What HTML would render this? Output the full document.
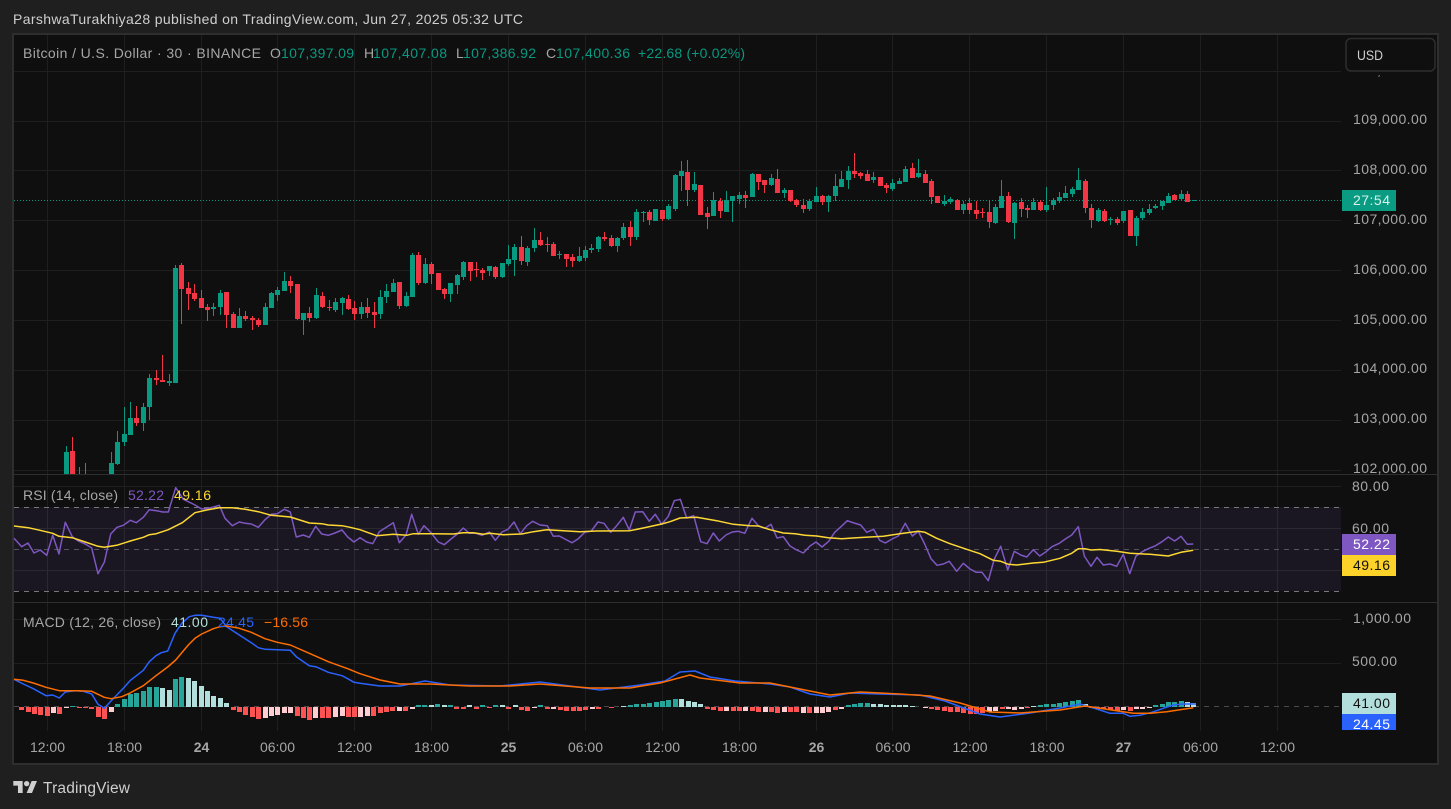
<!DOCTYPE html>
<html><head><meta charset="utf-8"><title>BTC chart</title>
<style>html,body{margin:0;padding:0;background:#1f1f1f;width:1451px;height:809px;overflow:hidden}svg{display:block}text{font-family:"Liberation Sans",sans-serif;font-size:14px;fill:#a6a6a6}</style></head><body>
<svg width="1451" height="809" viewBox="0 0 1451 809" xmlns="http://www.w3.org/2000/svg">
<defs><clipPath id="p"><rect x="14" y="35" width="1327" height="439"/></clipPath><clipPath id="lb"><rect x="1342" y="714" width="54" height="16"/></clipPath></defs>
<rect width="1451" height="809" fill="#1f1f1f"/>
<text x="13" y="24" textLength="510" lengthAdjust="spacing" style="fill:#cfcfcf">ParshwaTurakhiya28 published on TradingView.com, Jun 27, 2025 05:32 UTC</text>
<rect x="13" y="34" width="1425" height="730" fill="#0f0f0f" stroke="#2e2e2e" stroke-width="2"/>
<rect x="14" y="507" width="1327" height="84" fill="#1a1722"/>
<g shape-rendering="crispEdges" fill="none">
<path stroke="#1f1f1f" d="M14 71.5H1341M14 121.5H1341M14 170.5H1341M14 220.5H1341M14 270.5H1341M14 320.5H1341M14 370.5H1341M14 420.5H1341M14 470.5H1341M14 486.5H1341M14 619.5H1341M14 663.5H1341"/>
<path stroke="#2a2830" d="M14 528.5H1341M14 570.5H1341"/>
<path stroke="#1f1f1f" d="M47.5 35V731M124.5 35V731M201.5 35V731M277.5 35V731M354.5 35V731M431.5 35V731M508.5 35V731M585.5 35V731M662.5 35V731M739.5 35V731M816.5 35V731M892.5 35V731M969.5 35V731M1046.5 35V731M1123.5 35V731M1200.5 35V731M1277.5 35V731"/>
<path stroke="#2a2830" d="M47.5 507V591M124.5 507V591M201.5 507V591M277.5 507V591M354.5 507V591M431.5 507V591M508.5 507V591M585.5 507V591M662.5 507V591M739.5 507V591M816.5 507V591M892.5 507V591M969.5 507V591M1046.5 507V591M1123.5 507V591M1200.5 507V591M1277.5 507V591"/>
<path stroke="#2e2e2e" d="M14 474.5H1437M14 602.5H1437"/>
<path stroke="#787878" stroke-dasharray="5 5" d="M14 507.5H1341M14 591.5H1341"/>
<path stroke="#55555c" stroke-dasharray="5 5" d="M14 549.5H1341"/>
<path stroke="#4a4a4a" stroke-dasharray="5 5" d="M14 706.5H1341"/>
<path stroke="#089981" stroke-dasharray="1 2" d="M14 200.5H1341"/>
</g>
<g clip-path="url(#p)" shape-rendering="crispEdges" fill="none">
<path stroke="#089981" stroke-width="1" d="M66.5 446V474M111.5 452V474M117.5 431V465M124.5 407V446M130.5 402V435M143.5 403V431M149.5 374V420M169.5 374V386M175.5 265V383M213.5 303V316M220.5 290V315M239.5 308V328M265.5 303V325M271.5 292V308M277.5 287V301M284.5 272V291M303.5 313V335M316.5 288V319M335.5 298V312M342.5 297V315M361.5 302V319M380.5 290V319M386.5 284V303M393.5 279V292M406.5 292V307M412.5 253V297M425.5 258V284M450.5 283V302M457.5 274V294M463.5 261V280M489.5 266V276M502.5 263V278M508.5 245V266M514.5 244V276M527.5 246V266M534.5 228V252M559.5 251V259M579.5 247V262M585.5 246V261M591.5 244V253M598.5 236V252M617.5 237V252M623.5 223V240M636.5 209V240M643.5 211V222M655.5 209V221M668.5 204V220M675.5 174V211M681.5 161V191M694.5 172V192M713.5 192V216M726.5 191V212M732.5 196V222M739.5 192V204M752.5 173V197M771.5 174V186M784.5 188V198M809.5 199V211M816.5 187V202M828.5 195V212M835.5 174V201M841.5 171V187M848.5 166V189M873.5 172V183M892.5 179V191M899.5 178V184M905.5 166V182M918.5 159V178M944.5 195V206M950.5 197V204M963.5 201V214M995.5 204V224M1001.5 180V208M1014.5 202V239M1033.5 198V210M1046.5 187V212M1053.5 198V210M1059.5 192V203M1065.5 186V198M1072.5 187V197M1078.5 168V190M1098.5 208V222M1110.5 217V225M1123.5 211V223M1136.5 216V246M1142.5 208V220M1149.5 204V215M1155.5 204V209M1162.5 201V210M1168.5 193V203M1181.5 190V200"/>
<path stroke="#089981" stroke-width="5" d="M66.5 452V474M111.5 463V474M117.5 442V464M124.5 434V442M130.5 418V435M143.5 407V423M149.5 378V407M169.5 381V383M175.5 268V383M213.5 307V309M220.5 293V307M239.5 316V328M265.5 307V325M271.5 293V308M277.5 290V295M284.5 281V291M303.5 313V320M316.5 295V318M335.5 302V310M342.5 298V303M361.5 307V314M380.5 297V314M386.5 291V297M393.5 283V292M406.5 296V306M412.5 255V297M425.5 264V283M450.5 283V294M457.5 275V285M463.5 262V277M489.5 266V271M502.5 263V277M508.5 259V264M514.5 247V260M527.5 248V262M534.5 240V248M559.5 254V255M579.5 256V261M585.5 250V258M591.5 248V250M598.5 237V249M617.5 238V246M623.5 227V238M636.5 212V237M643.5 212V213M655.5 209V221M668.5 206V219M675.5 175V209M681.5 171V176M694.5 184V190M713.5 200V216M726.5 200V212M732.5 196V201M739.5 195V199M752.5 174V197M771.5 178V185M784.5 190V193M809.5 201V209M816.5 196V202M828.5 196V202M835.5 186V196M841.5 179V187M848.5 171V180M873.5 177V180M892.5 183V189M899.5 181V184M905.5 169V182M918.5 173V177M944.5 201V204M950.5 199V202M963.5 204V210M995.5 207V223M1001.5 196V208M1014.5 203V223M1033.5 202V210M1046.5 205V210M1053.5 200V205M1059.5 197V201M1065.5 193V198M1072.5 189V194M1078.5 180V190M1098.5 210V221M1110.5 219V220M1123.5 211V221M1136.5 218V236M1142.5 212V218M1149.5 209V213M1155.5 206V208M1162.5 201V206M1168.5 196V203M1181.5 194V199"/>
<path stroke="#f23645" stroke-width="1" d="M72.5 437V474M79.5 467V474M85.5 463V474M136.5 406V426M156.5 370V385M162.5 355V382M181.5 263V324M188.5 282V310M194.5 284V301M201.5 290V308M207.5 304V321M226.5 292V328M233.5 312V328M245.5 311V321M252.5 316V330M258.5 318V327M290.5 276V293M297.5 284V320M309.5 307V322M322.5 292V308M329.5 300V311M348.5 295V310M354.5 301V320M367.5 298V318M374.5 302V328M399.5 282V309M418.5 252V285M431.5 262V284M438.5 273V290M444.5 288V299M470.5 262V281M476.5 262V277M482.5 268V280M495.5 266V279M521.5 236V265M540.5 232V246M547.5 237V252M553.5 242V256M566.5 254V267M572.5 254V267M604.5 232V241M611.5 235V247M630.5 221V246M649.5 210V225M662.5 210V221M687.5 160V206M700.5 185V215M707.5 207V229M720.5 198V218M745.5 191V208M758.5 174V190M764.5 180V193M777.5 169V193M790.5 190V202M796.5 199V207M803.5 199V213M822.5 195V205M854.5 153V178M860.5 172V179M867.5 170V181M880.5 177V186M886.5 183V193M912.5 163V178M925.5 170V183M931.5 179V204M937.5 196V203M957.5 199V210M969.5 198V214M976.5 201V219M982.5 208V218M989.5 201V228M1008.5 192V223M1021.5 198V217M1027.5 205V218M1040.5 200V211M1085.5 179V213M1091.5 204V228M1104.5 209V222M1117.5 217V225M1130.5 210V236M1174.5 194V200M1187.5 191V202"/>
<path stroke="#f23645" stroke-width="5" d="M72.5 451V474M136.5 418V423M156.5 378V380M162.5 380V382M181.5 265V289M188.5 288V294M194.5 293V299M201.5 298V308M207.5 307V310M226.5 292V315M233.5 314V328M245.5 316V319M252.5 318V320M258.5 320V325M290.5 281V286M297.5 284V319M309.5 313V318M322.5 296V307M329.5 307V308M348.5 299V309M354.5 308V314M367.5 307V313M374.5 312V315M399.5 282V306M418.5 255V283M431.5 264V274M438.5 273V290M444.5 289V294M470.5 262V271M476.5 269V270M482.5 270V273M495.5 267V277M521.5 247V261M540.5 240V245M547.5 244V245M553.5 244V256M566.5 254V259M572.5 257V261M604.5 237V239M611.5 238V246M630.5 227V237M649.5 212V220M662.5 210V219M687.5 172V190M700.5 185V215M707.5 213V217M720.5 201V211M745.5 195V198M758.5 174V182M764.5 180V185M777.5 179V193M790.5 190V201M796.5 200V205M803.5 205V209M822.5 196V202M854.5 171V174M860.5 173V176M867.5 174V181M880.5 177V186M886.5 185V188M912.5 168V178M925.5 174V183M931.5 181V197M937.5 196V203M957.5 200V210M969.5 203V210M976.5 210V214M982.5 212V213M989.5 212V222M1008.5 196V222M1021.5 202V209M1027.5 208V210M1040.5 202V210M1085.5 181V208M1091.5 208V220M1104.5 211V221M1117.5 219V223M1130.5 210V236M1174.5 195V200M1187.5 194V202"/>
<path stroke="#089981" d="M1192 200.5H1197"/>
</g>
<polyline fill="none" stroke="#7e57c2" stroke-width="1.5" stroke-linejoin="round" points="14,538.3 21.7,546.7 28,543 34,553 40.3,550 46.7,555.3 52.7,535.3 59,554 65.3,522.3 72.3,536.7 77.7,540.7 85.3,544 91.7,548 98,573.7 104.3,562.3 110.7,534 117,527.3 123.3,525.3 130.3,520.3 136.3,522.7 143.3,517.3 149.3,509.7 156.3,510.7 162.7,512 168.3,512 175.7,487.7 183.3,499.3 188.3,501.7 195,505 201.7,509 208.3,508.3 219.3,505.3 225,518.3 232.3,525.7 239.3,522 245.3,523.3 251.3,524 258.3,527.3 265,519.7 271.3,514.3 277.3,513.7 284.3,509.3 290.3,512 296.3,537 303.3,535 309.3,537.3 315.7,526.3 321.7,534 328.3,535.3 335,533 342,530 347.7,537 354,542 360,537.7 366.7,542 372.7,543.7 379.3,531.7 386.3,527.3 393.3,522.7 399.3,542.7 406,535 411.7,514.3 418.3,534.3 424,525.7 431,532.7 438.3,542 444.3,544.7 451,539 457.3,534 463.3,528 469.3,533.3 475.7,533.3 482,535.3 489.3,532 495.3,540.3 502,532 508,529.3 514,522 520.3,533.7 526.7,525.7 532.7,521.3 540,525 547.3,525.7 553.3,536.3 559.3,536 566.7,540 572,542.7 578.3,538.7 584.7,532.3 591.3,531 598,522 604,523.3 610.7,532.3 616.7,525.7 623.3,517.3 629.3,530 635.3,512 642.7,511.7 649.3,521.3 655.3,514.3 661.7,524.3 668.3,516.3 674.3,500.7 680.3,499.3 686.7,518 693.7,515.7 700.7,541.7 707,543.7 713.3,533 719.3,541 726,535 732.3,532 738.3,531.3 744.7,533.3 750,522.3 752,518.3 758.3,525.7 765,528.3 771,524.3 777,538 783.3,536.7 790,546 796.7,550 803.3,553 810,546 816,542 822,547 828.7,541.3 834.7,532.3 841,526.7 847.3,520.7 854,523 860.7,525 866.7,532.3 873.7,529.3 879.7,540.3 885.3,543 892,539 898.3,536 905.3,523.3 912.3,536 918.3,531.3 924.7,544 931,558.7 937,565.3 943.3,564 949.3,561.3 956.7,571.3 963.3,563.3 970,569 976.3,572.3 982,572.3 988.3,580.7 994.3,559 1000.7,546.3 1007.7,570 1014.3,551.3 1020.7,555 1026.7,557 1033.3,549.7 1039.7,556 1046,551.7 1052,546.7 1059.3,543.3 1065.3,539 1071.7,535 1078.3,526.7 1084.3,556 1091,566.3 1097,557.3 1103.3,565 1110,564 1116.7,566.3 1123.3,554.3 1129.7,573.7 1136,556 1142.3,551.7 1149,548.3 1155,546 1162,541.7 1168.3,537 1174.7,541 1181,536.3 1187.3,544.3 1193.3,544"/>
<polyline fill="none" stroke="#fdd835" stroke-width="1.5" stroke-linejoin="round" points="14,526 28.3,527.7 40,530.3 52.7,533.3 59,536.3 72.3,537.7 85.3,542 98,546.3 104.3,547.3 116.7,545.3 130.3,541 143.3,537.3 149.3,534.7 156.3,533.7 168.3,529.7 182.3,522.7 195,512.7 206.7,510 219.3,507.7 232.3,507.7 245.3,509.3 258.3,511.7 271.3,515.3 290.3,517 309.3,523 321.7,523.7 328.3,525 342,525.7 350,527.3 360,529.7 370,533.3 376.7,535.7 393.3,534.3 406.7,535.3 413.3,533.7 433.3,533.7 453.3,534 463.3,532.7 473.3,532.7 483.3,534.3 490,533.3 503.3,534.7 521.7,534 533.3,531.7 546.7,529.7 563.3,530.7 580,531.7 596.7,531 630,530.7 643.3,528 661.7,524 670,521.7 680,518 696.7,517.3 716.7,520.7 733.3,524.3 750,525.8 758.3,526 770,529.7 783.3,533 795,533.7 805,535.3 816.7,536 828.3,537.7 841.7,538.7 856.7,537.7 883.3,536.3 900,533.7 918.3,531.3 925,532.3 936.7,538.3 950,543.7 966.7,549.3 980,553.7 993.3,560.3 1000.7,561.3 1008.3,564.3 1016.7,565 1033.3,563 1043.3,562.3 1060,558.3 1071.7,553.3 1078.3,548.7 1085,548.7 1091,550 1100,549.5 1116.7,551.3 1130,553.3 1150,554.3 1168.3,556 1181,552.3 1193.3,550.3"/>
<g shape-rendering="crispEdges" fill="none" stroke-width="5">
<path stroke="#ff5252" d="M21.5 707V710M28.5 707V712M34.5 707V714M40.5 707V715M47.5 707V716M59.5 707V714M79.5 707V708M85.5 707V708M91.5 707V709M98.5 707V717M104.5 707V719M233.5 707V710M239.5 707V712M245.5 707V715M252.5 707V717M258.5 707V719M297.5 707V716M303.5 707V718M309.5 707V720M322.5 707V718M328.5 707V718M348.5 707V717M354.5 707V717M373.5 707V716M380.5 707V713M386.5 707V712M392.5 707V711M405.5 707V711M456.5 707V709M463.5 707V709M476.5 707V709M489.5 707V708M508.5 707V709M521.5 707V710M527.5 707V711M547.5 707V709M560.5 707V710M566.5 707V711M573.5 707V711M579.5 707V711M585.5 707V710M598.5 707V709M611.5 707V708M707.5 707V709M713.5 707V710M720.5 707V711M733.5 707V711M739.5 707V711M752.5 707V711M758.5 707V712M771.5 707V712M777.5 707V713M790.5 707V712M796.5 707V712M809.5 707V713M835.5 707V710M931.5 707V709M937.5 707V710M944.5 707V711M950.5 707V712M957.5 707V712M963.5 707V713M970.5 707V714M976.5 707V714M982.5 707V713M1002.5 707V709M1027.5 707V708M1091.5 707V708M1097.5 707V709M1103.5 707V709M1110.5 707V710M1117.5 707V711M1130.5 707V711"/>
<path stroke="#ffcdd2" d="M53.5 707V713M66.5 707V708M111.5 707V712M265.5 707V718M271.5 707V716M277.5 707V715M284.5 707V713M290.5 707V713M315.5 707V718M335.5 707V717M342.5 707V716M360.5 707V717M367.5 707V716M399.5 707V711M412.5 707V709M534.5 707V708M553.5 707V709M592.5 707V709M726.5 707V711M745.5 707V711M765.5 707V712M784.5 707V712M803.5 707V713M816.5 707V713M822.5 707V713M828.5 707V712M841.5 707V709M925.5 707V708M989.5 707V712M995.5 707V711M1008.5 707V709M1014.5 707V710M1021.5 707V709M1123.5 707V710M1136.5 707V709M1142.5 707V709M1149.5 707V708"/>
<path stroke="#26a69a" d="M72.5 706V707M117.5 704V707M124.5 699V707M130.5 694V707M136.5 693V707M143.5 691V707M149.5 687V707M156.5 687V707M175.5 679V707M181.5 677V707M418.5 705V707M424.5 705V707M437.5 704V707M450.5 705V707M482.5 705V707M495.5 705V707M540.5 705V707M630.5 705V707M636.5 704V707M643.5 704V707M649.5 703V707M656.5 702V707M662.5 701V707M668.5 700V707M675.5 699V707M848.5 705V707M854.5 704V707M860.5 703V707M867.5 703V707M1040.5 705V707M1046.5 704V707M1053.5 704V707M1059.5 703V707M1065.5 702V707M1072.5 701V707M1078.5 700V707M1155.5 705V707M1162.5 704V707M1168.5 702V707M1174.5 702V707M1181.5 701V707"/>
<path stroke="#b2dfdb" d="M162.5 688V707M169.5 690V707M188.5 678V707M194.5 681V707M201.5 686V707M207.5 691V707M213.5 696V707M220.5 698V707M226.5 703V707M431.5 705V707M444.5 705V707M469.5 705V707M502.5 705V707M515.5 705V707M623.5 706V707M681.5 699V707M688.5 701V707M694.5 702V707M700.5 704V707M873.5 704V707M880.5 704V707M886.5 705V707M893.5 705V707M899.5 705V707M905.5 705V707M912.5 706V707M1033.5 706V707M1085.5 704V707M1187.5 702V707M1193.5 703V707"/>
</g>
<polyline fill="none" stroke="#2962ff" stroke-width="1.5" stroke-linejoin="round" points="14,679.3 23.3,684 33.3,688.7 46,695.7 52.7,695 59.3,698 65.3,692 75,690.7 83.3,691.3 91.7,694 98,704.3 104.3,708.3 111,701 123.3,688.3 130,680.7 143.3,670.3 149.3,661.7 156,655.7 161.3,652.7 167.7,651 175,633.3 181.7,623.3 189.3,616.7 195,615.3 201.7,615.3 213.3,617.3 220,618.3 226.7,626.7 239.3,635 251.3,642.7 258.3,647.7 265,649.3 277.3,649.7 290.3,650.3 296.3,656.7 309.3,665.7 315.7,666.7 321.7,669.3 328.3,672.3 342,675.7 347.7,678.7 354,682.3 360,683.3 380,686 400,686 425,681 450,685 500,686 540,682 570,686 600,690 640,685 665,681 680,672 695,671 710,677 735,681 770,684 790,687 810,694 830,697 850,693 880,694 920,695 945,701 980,714 1000,717 1030,713 1060,708 1080,704 1100,710 1110,713.3 1123.3,713.3 1130,716.3 1140,715.3 1151.7,712.3 1163.3,708.3 1173.3,705 1183.3,704 1196,704"/>
<polyline fill="none" stroke="#ff6d00" stroke-width="1.5" stroke-linejoin="round" points="14,679.3 23.3,680.3 33.3,683 46,687.3 59.3,690.7 78.3,690.7 91.7,691.3 98,694.3 104.3,697.3 111,698.7 121.7,696.7 130,693 143.3,685.7 156,675.7 167.7,667 175.7,660 188.3,645 195,638.3 201.7,634 213.3,628.7 220,626.7 226.7,626 239.3,628.3 251.3,632.3 265,638.7 277.3,642.3 290.3,645 309.3,653.3 328.3,661.7 347.7,668.7 360,673.7 380,680 400,684 430,684 470,686 510,686 540,684 590,688 630,688 660,683 690,675 700,678 740,683 770,683 800,689 830,695 860,692 900,694 930,696 960,703 990,712 1020,713 1060,710 1085,706 1100,708.3 1116.7,710.7 1133.3,713.3 1150,713.3 1166.7,711.7 1193.3,707.7"/>
<text x="23" y="58" textLength="238" lengthAdjust="spacing">Bitcoin / U.S. Dollar · 30 · BINANCE</text>
<text x="270" y="58" textLength="11" lengthAdjust="spacing">O</text><text x="281" y="58" textLength="73" lengthAdjust="spacing" style="fill:#089981">107,397.09</text>
<text x="364" y="58" textLength="9" lengthAdjust="spacing">H</text><text x="373" y="58" textLength="74" lengthAdjust="spacing" style="fill:#089981">107,407.08</text>
<text x="456" y="58" textLength="7" lengthAdjust="spacing">L</text><text x="463" y="58" textLength="73" lengthAdjust="spacing" style="fill:#089981">107,386.92</text>
<text x="546" y="58" textLength="10" lengthAdjust="spacing">C</text><text x="556" y="58" textLength="74" lengthAdjust="spacing" style="fill:#089981">107,400.36</text>
<text x="638" y="58" textLength="107" lengthAdjust="spacing" style="fill:#089981">+22.68 (+0.02%)</text>
<text x="1353" y="75" textLength="74" lengthAdjust="spacing">110,000.00</text>
<rect x="1342" y="36" width="94" height="39" fill="#0f0f0f"/>
<rect x="1346" y="38.5" width="89" height="32.5" rx="5" fill="#0f0f0f" stroke="#2e2e2e" stroke-width="1.5"/>
<text x="1357" y="60" textLength="26" lengthAdjust="spacingAndGlyphs" style="fill:#cfcfcf">USD</text>
<text x="1353" y="124" textLength="74" lengthAdjust="spacing">109,000.00</text>
<text x="1353" y="174" textLength="74" lengthAdjust="spacing">108,000.00</text>
<text x="1353" y="224" textLength="74" lengthAdjust="spacing">107,000.00</text>
<text x="1353" y="274" textLength="74" lengthAdjust="spacing">106,000.00</text>
<text x="1353" y="324" textLength="74" lengthAdjust="spacing">105,000.00</text>
<text x="1353" y="373" textLength="74" lengthAdjust="spacing">104,000.00</text>
<text x="1353" y="423" textLength="74" lengthAdjust="spacing">103,000.00</text>
<text x="1353" y="473" textLength="74" lengthAdjust="spacing">102,000.00</text>
<rect x="1342" y="190" width="54" height="21" fill="#0a9c83"/>
<text x="1353" y="205" textLength="37" lengthAdjust="spacing" style="fill:#d5f2ec">27:54</text>
<text x="23" y="500" textLength="95" lengthAdjust="spacing">RSI (14, close)</text>
<text x="128" y="500" textLength="36" lengthAdjust="spacing" style="fill:#7e57c2">52.22</text>
<text x="174" y="500" textLength="37" lengthAdjust="spacing" style="fill:#fdd835">49.16</text>
<text x="1352" y="491" textLength="37" lengthAdjust="spacing">80.00</text>
<text x="1352" y="533" textLength="37" lengthAdjust="spacing">60.00</text>
<rect x="1342" y="534" width="54" height="21" fill="#7e57c2"/>
<rect x="1342" y="555" width="54" height="21" fill="#fdd32a"/>
<text x="1353" y="549" textLength="37" lengthAdjust="spacing" style="fill:#fff">52.22</text>
<text x="1353" y="570" textLength="37" lengthAdjust="spacing" style="fill:#111">49.16</text>
<text x="23" y="627" textLength="138" lengthAdjust="spacing">MACD (12, 26, close)</text>
<text x="171" y="627" textLength="37" lengthAdjust="spacing" style="fill:#b2dfdb">41.00</text>
<text x="218" y="627" textLength="36" lengthAdjust="spacing" style="fill:#2962ff">24.45</text>
<text x="264" y="627" textLength="44" lengthAdjust="spacing" style="fill:#ff6d00">−16.56</text>
<text x="1353" y="623" textLength="58" lengthAdjust="spacing">1,000.00</text>
<text x="1352" y="666" textLength="45" lengthAdjust="spacing">500.00</text>
<rect x="1342" y="693" width="54" height="21" fill="#b2dfdb"/>
<rect x="1342" y="714" width="54" height="16" fill="#2962ff"/>
<text x="1353" y="708" textLength="37" lengthAdjust="spacing" style="fill:#111">41.00</text>
<text x="1353" y="729" textLength="37" lengthAdjust="spacing" clip-path="url(#lb)" style="fill:#fff">24.45</text>
<g text-anchor="middle">
<text x="47.5" y="752">12:00</text><text x="124.5" y="752">18:00</text><text x="201.5" y="752" style="font-weight:bold">24</text><text x="277.5" y="752">06:00</text><text x="354.5" y="752">12:00</text><text x="431.5" y="752">18:00</text><text x="508.5" y="752" style="font-weight:bold">25</text><text x="585.5" y="752">06:00</text><text x="662.5" y="752">12:00</text><text x="739.5" y="752">18:00</text><text x="816.5" y="752" style="font-weight:bold">26</text><text x="893" y="752">06:00</text><text x="970" y="752">12:00</text><text x="1047" y="752">18:00</text><text x="1123.5" y="752" style="font-weight:bold">27</text><text x="1200.5" y="752">06:00</text><text x="1277.5" y="752">12:00</text>
</g>
<g transform="translate(13.3 778.3) scale(.667)" fill="#cfcfcf"><path d="M14 22H7V11H0V4h14v18ZM28 22h-8l7.5-18h8L28 22Z"/><circle cx="20" cy="8" r="4"/></g>
<text x="43" y="793" textLength="87" lengthAdjust="spacing" style="fill:#cfcfcf;font-size:15.5px">TradingView</text>
</svg>
</body></html>
